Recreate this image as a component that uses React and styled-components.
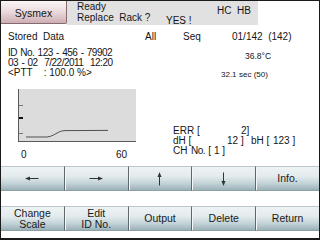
import React from 'react';
import styled, { createGlobalStyle } from 'styled-components';

const Global = createGlobalStyle`
  html, body { margin: 0; padding: 0; background: #fff; }
  #root { width: 320px; height: 240px; }
`;

const Screen = styled.div`
  box-sizing: border-box;
  width: 320px;
  height: 240px;
  border: 1px solid #1a1a1a;
  border-bottom-width: 2px;
  background: #fff;
  display: flex;
  flex-direction: column;
  font-family: "Liberation Sans", Arial, sans-serif;
  color: #151515;
  overflow: hidden;
`;

const Header = styled.div`
  display: flex;
  height: 24px;
  flex: none;
`;

const Brand = styled.div`
  box-sizing: border-box;
  width: 66px;
  height: 23px;
  display: flex;
  align-items: center;
  justify-content: center;
  font-size: 10.5px;
  padding-top: 1px;
  background: linear-gradient(#faf5f6, #ead9dc 50%, #cdaeb3);
  border-right: 1px solid #866a6f;
  border-bottom: 1px solid #866a6f;
  border-bottom-right-radius: 2px;
`;

const Status = styled.div`
  box-sizing: border-box;
  width: 191px;
  height: 24px;
  background: #e1e1e1;
  padding-left: 10px;
  display: flex;
  line-height: 11px;
`;

const Slot = styled.div`
  flex: none;
  white-space: pre;
  width: ${(p) => (p.$w ? `${p.$w}px` : 'auto')};
  padding-top: ${(p) => p.$pt || 0}px;
  font-size: ${(p) => p.$size || 10}px;
  letter-spacing: ${(p) => (p.$tight ? '-0.5px' : 'normal')};
  word-spacing: ${(p) => (p.$tight ? '1px' : 'normal')};
`;

const Info = styled.div`
  padding-left: 7px;
  display: flex;
  flex-direction: column;
`;

const InfoRow = styled.div`
  display: flex;
  align-items: flex-start;
  height: 10px;
  line-height: 10px;
  margin-top: ${(p) => p.$mt || 0}px;
`;

const Mid = styled.div`
  display: flex;
  margin-top: 10.5px;
`;

const GraphCol = styled.div`
  box-sizing: border-box;
  width: 172px;
  padding-left: 17px;
  display: flex;
  flex-direction: column;
`;

const Graph = styled.div`
  box-sizing: border-box;
  width: 118px;
  height: 53px;
  background: #dcdcdc;
  border-left: 1px solid #5a5a5a;
  border-bottom: 1px solid #5a5a5a;
  svg { display: block; }
`;

const AxisLabels = styled.div`
  display: flex;
  padding-left: 3px;
  margin-top: 8.5px;
  line-height: 10px;
`;

const ReadCol = styled.div`
  padding-top: 37.5px;
  display: flex;
  flex-direction: column;
`;

const Buttons = styled.div`
  margin-top: auto;
  padding-bottom: 7px;
  display: flex;
  flex-direction: column;
  gap: 15px;
`;

const BtnRow = styled.div`
  display: flex;
  height: 25px;
`;

const Btn = styled.div`
  box-sizing: border-box;
  flex: 1;
  display: flex;
  align-items: center;
  justify-content: center;
  text-align: center;
  font-size: 10.5px;
  line-height: 11px;
  color: #1a1a1a;
  background: linear-gradient(#eef3f4 0%, #e3ebed 40%, #c2d2d7 72%, #9cb2b9 100%);
  border-top: 1px solid #b9c6ca;
  border-bottom: 1px solid #8ea1a7;
  border-left: ${(p) => (p.$first ? 'none' : '1px solid #5e676b')};
  box-shadow: ${(p) => (p.$first ? 'none' : 'inset 1px 0 #f4f8f9')};
`;

const ArrowSvg = styled.svg`
  display: block;
  fill: #333;
  stroke: #333;
`;

function Arrow({ dir }) {
  if (dir === 'left' || dir === 'right') {
    const flip = dir === 'right';
    return (
      <ArrowSvg width="14" height="7" viewBox="0 0 14 7" style={flip ? { transform: 'scaleX(-1)' } : undefined}>
        <line x1="4" y1="3.5" x2="13.5" y2="3.5" strokeWidth="1" />
        <polygon points="0,3.5 5,1.5 5,5.5" stroke="none" />
      </ArrowSvg>
    );
  }
  const flip = dir === 'down';
  return (
    <ArrowSvg width="7" height="14" viewBox="0 0 7 14" style={flip ? { transform: 'scaleY(-1)' } : undefined}>
      <line x1="3.5" y1="4" x2="3.5" y2="13.5" strokeWidth="1" />
      <polygon points="3.5,0 1.5,5 5.5,5" stroke="none" />
    </ArrowSvg>
  );
}

function Curve() {
  return (
    <svg width="117" height="52" viewBox="0 0 117 52">
      <line x1="0" y1="16.5" x2="4" y2="16.5" stroke="#7a7a7a" strokeWidth="1" />
      <line x1="0" y1="29" x2="4" y2="29" stroke="#111" strokeWidth="2" />
      <line x1="0" y1="44.5" x2="4" y2="44.5" stroke="#7a7a7a" strokeWidth="1" />
      <path
        d="M7 48 L28 48 C33 47.5 36 45 39 43.5 C41 42.5 43 41.8 46 41.6 L89 41.4"
        fill="none"
        stroke="#505050"
        strokeWidth="1"
      />
    </svg>
  );
}

export default function App() {
  return (
    <>
      <Global />
      <Screen>
        <Header>
          <Brand>Sysmex</Brand>
          <Status>
            <Slot $w={89}>
              Ready
              <br />
              {'Replace  Rack ?'}
            </Slot>
            <Slot $w={51} $pt={14}>YES !</Slot>
            <Slot $pt={4}>{'HC  HB'}</Slot>
          </Status>
        </Header>

        <Info>
          <InfoRow $mt={6.5}>
            <Slot $w={137}>{'Stored  Data'}</Slot>
            <Slot $w={38}>All</Slot>
            <Slot $w={49}>Seq</Slot>
            <Slot>{'01/142  (142)'}</Slot>
          </InfoRow>
          <InfoRow $mt={6.5}>
            <Slot $w={237} $tight>ID No. 123 - 456 - 79902</Slot>
            <Slot $pt={3} $size={8.5}>36.8°C</Slot>
          </InfoRow>
          <InfoRow>
            <Slot $tight>{'03 - 02  7/22/2011  12:20'}</Slot>
          </InfoRow>
          <InfoRow>
            <Slot $w={213}>{'<PTT    : 100.0 %>'}</Slot>
            <Slot $w={18} $pt={1.5} $size={8}>32.1</Slot>
            <Slot $pt={1.5} $size={8}>sec (50)</Slot>
          </InfoRow>
        </Info>

        <Mid>
          <GraphCol>
            <Graph>
              <Curve />
            </Graph>
            <AxisLabels>
              <Slot $w={95}>0</Slot>
              <Slot>60</Slot>
            </AxisLabels>
          </GraphCol>
          <ReadCol>
            <InfoRow>
              <Slot $w={68}>ERR [</Slot>
              <Slot>2]</Slot>
            </InfoRow>
            <InfoRow>
              <Slot $w={54}>dH [</Slot>
              <Slot $w={24}>12 ]</Slot>
              <Slot $w={22}>bH [</Slot>
              <Slot>123 ]</Slot>
            </InfoRow>
            <InfoRow>
              <Slot $w={18}>CH</Slot>
              <Slot $tight>No. [ 1 ]</Slot>
            </InfoRow>
          </ReadCol>
        </Mid>

        <Buttons>
          <BtnRow>
            <Btn $first><Arrow dir="left" /></Btn>
            <Btn><Arrow dir="right" /></Btn>
            <Btn><Arrow dir="up" /></Btn>
            <Btn><Arrow dir="down" /></Btn>
            <Btn>Info.</Btn>
          </BtnRow>
          <BtnRow>
            <Btn $first>Change<br />Scale</Btn>
            <Btn>Edit<br />{'ID  No.'}</Btn>
            <Btn>Output</Btn>
            <Btn>Delete</Btn>
            <Btn>Return</Btn>
          </BtnRow>
        </Buttons>
      </Screen>
    </>
  );
}
